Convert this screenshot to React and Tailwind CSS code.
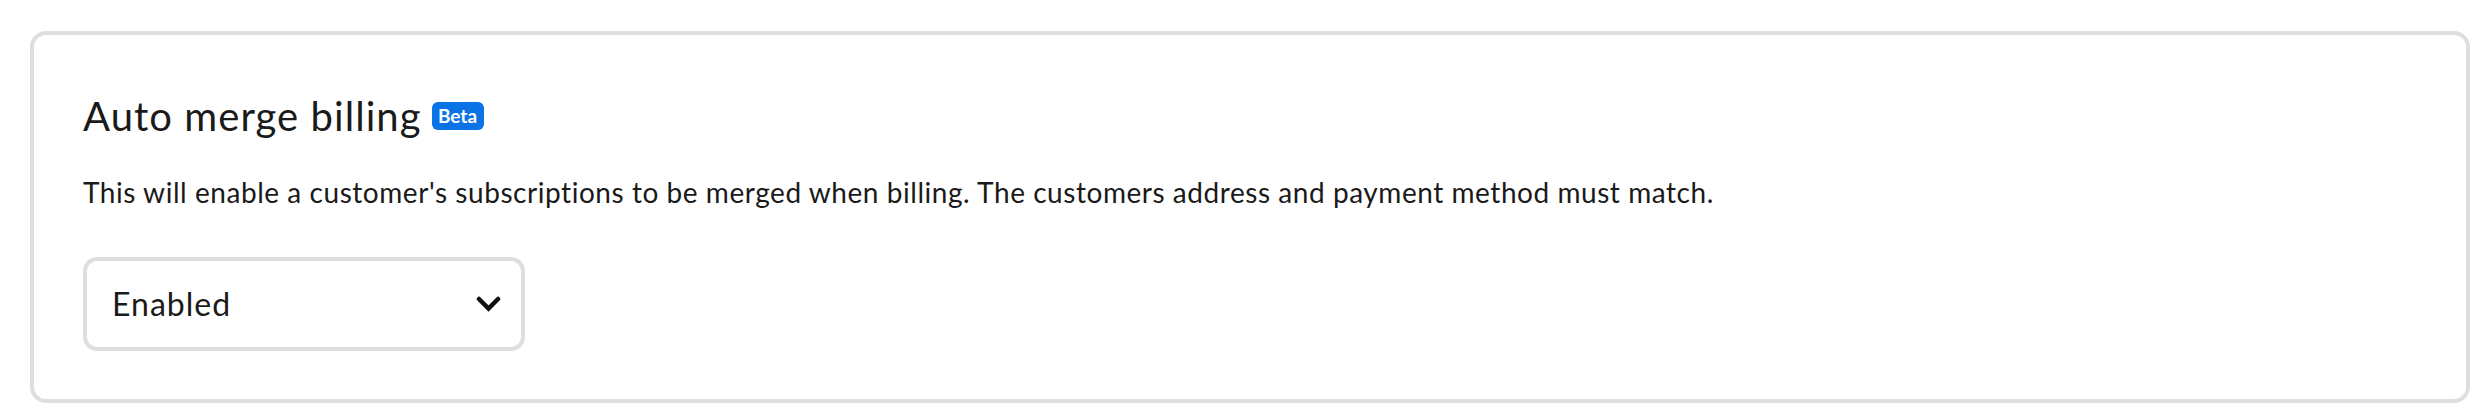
import React from "react";

export default function App() {
  return (
    <div className="w-[2484px] h-[420px] bg-white pt-[31px] pl-[30px]" style={{ fontFamily: "Lato, 'Noto Sans', sans-serif" }}>
      <div className="w-[2440px] h-[372px] border-[4px] border-[#dedede] rounded-[16px] bg-white px-[49px] pt-[57px] flex flex-col items-start text-[#1a1a1a]">
        <div className="flex items-center h-[48px]">
          <h2 className="text-[40px] leading-[48px] font-normal tracking-[1.05px]">Auto merge billing</h2>
          <span className="ml-[10px] h-[28px] w-[52px] rounded-[6px] bg-[#0a73e6] text-white text-[19px] font-bold leading-[28px] flex items-center justify-center">Beta</span>
        </div>
        <p className="mt-[32px] text-[28px] leading-[40px] font-normal tracking-[0.55px]">
          This will enable a customer's subscriptions to be merged when billing. The customers address and payment method must match.
        </p>
        <div className="mt-[45px] w-[442px] h-[94px] border-[4px] border-[#dedede] rounded-[14px] flex items-center justify-between pl-[25px] pr-[20px]">
          <span className="text-[32px] leading-[40px] font-normal tracking-[1px]">Enabled</span>
          <svg width="25" height="16" viewBox="0 0 25 16" fill="none">
            <path d="M3 3 L12.5 12.5 L22 3" stroke="#111" strokeWidth="4.5" strokeLinecap="round" strokeLinejoin="miter" />
          </svg>
        </div>
      </div>
    </div>
  );
}
